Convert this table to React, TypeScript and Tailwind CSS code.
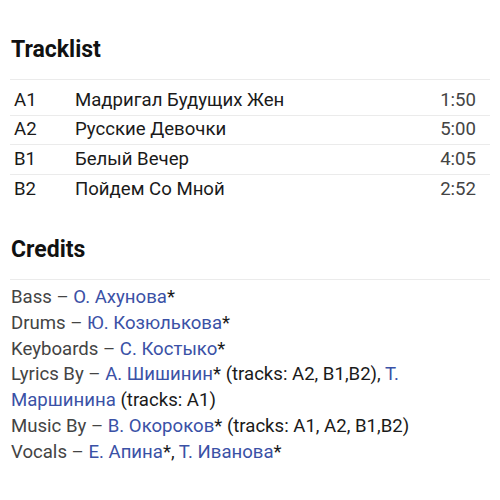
const tracks = [
  { pos: "A1", title: "Мадригал Будущих Жен", time: "1:50" },
  { pos: "A2", title: "Русские Девочки", time: "5:00" },
  { pos: "B1", title: "Белый Вечер", time: "4:05" },
  { pos: "B2", title: "Пойдем Со Мной", time: "2:52" },
];

const Link = ({ children }: { children: React.ReactNode }) => (
  <span className="text-[#3a51a6]">{children}</span>
);

export default function App() {
  return (
    <div
      className="w-[500px] h-[500px] bg-white px-[10px] overflow-hidden"
      style={{ fontFamily: "Roboto, 'Noto Sans', sans-serif" }}
    >
      {/* Tracklist */}
      <h2 className="pt-[36px] pb-[16px] pl-[1px] text-[23px] leading-[27px] font-bold text-[#111] border-b border-[#ebebeb]">
        Tracklist
      </h2>
      <div className="mt-[6px]">
        {tracks.map((t, i) => (
          <div
            key={t.pos}
            className={`flex items-center h-[29.5px] text-[18.6px] leading-[29px] ${
              i < tracks.length - 1 ? "border-b border-[#ebebeb]" : ""
            }`}
          >
            <span className="w-[65px] pl-[4px] text-[#1a1a1a]">{t.pos}</span>
            <span className="flex-1 text-[#1a1a1a]">{t.title}</span>
            <span className="pr-[14px] text-[#444]">{t.time}</span>
          </div>
        ))}
      </div>

      {/* Credits */}
      <h2 className="mt-[32px] pb-[16px] pl-[1px] text-[23px] leading-[27px] font-bold text-[#111] border-b border-[#ebebeb]">
        Credits
      </h2>
      <div className="mt-[5px] pl-[1px] text-[18.6px] leading-[25.8px] text-[#1a1a1a]">
        <p>
          <span className="text-[#444]">Bass – </span>
          <Link>О. Ахунова</Link>*
        </p>
        <p>
          <span className="text-[#444]">Drums – </span>
          <Link>Ю. Козюлькова</Link>*
        </p>
        <p>
          <span className="text-[#444]">Keyboards – </span>
          <Link>С. Костыко</Link>*
        </p>
        <p>
          <span className="text-[#444]">Lyrics By – </span>
          <Link>А. Шишинин</Link>* (tracks: A2, B1,B2), <Link>Т. Маршинина</Link> (tracks: A1)
        </p>
        <p>
          <span className="text-[#444]">Music By – </span>
          <Link>В. Окороков</Link>* (tracks: A1, A2, B1,B2)
        </p>
        <p>
          <span className="text-[#444]">Vocals – </span>
          <Link>Е. Апина</Link>*, <Link>Т. Иванова</Link>*
        </p>
      </div>
    </div>
  );
}
